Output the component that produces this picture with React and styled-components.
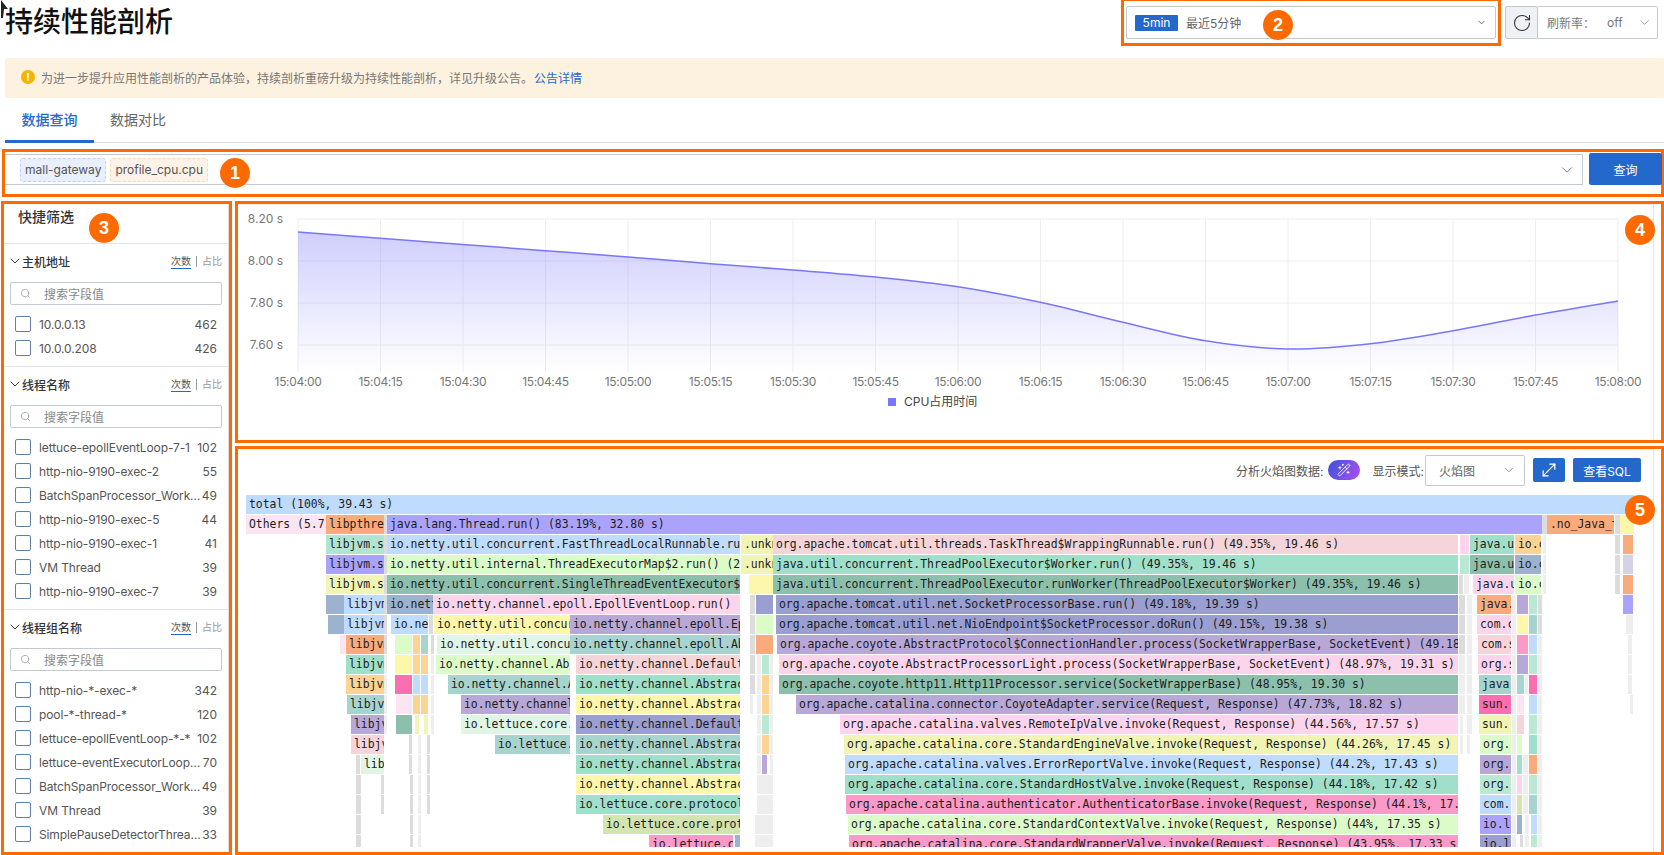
import React from 'react';
import styled, { createGlobalStyle } from 'styled-components';
import { ChevronDown, RotateCw, Search, WandSparkles, MoveDiagonal } from 'lucide-react';

const SANS = `Inter, "Noto Sans CJK SC", sans-serif`;
const ORANGE = '#ff6a00';
const BLUE = '#2468cc';

const Global = createGlobalStyle`
  html, body { margin: 0; padding: 0; background: #fff; }
  body { width: 1664px; height: 855px; overflow: hidden; font-family: ${SANS}; }
  * { box-sizing: border-box; }
`;

const Page = styled.div`
  position: relative;
  width: 1664px;
  height: 855px;
  overflow: hidden;
  display: flex;
  flex-direction: column;
`;
const Cursor = styled.svg`
  position: absolute;
  left: 0;
  top: 0;
`;
const Header = styled.header`
  height: 46px;
  padding: 0 6px 0 5px;
  display: flex;
  align-items: flex-start;
  justify-content: space-between;
`;
const Title = styled.h1`
  margin: 4px 0 0;
  font-size: 28px;
  line-height: 36px;
  font-weight: 500;
  color: #111;
`;
const HeaderRight = styled.div`
  display: flex;
  align-items: flex-start;
`;
const Marked = styled.div`
  position: relative;
  border: 3px solid ${ORANGE};
`;
const TimeBox = styled(Marked)`
  width: 380px;
  height: 48px;
  margin: -2px 4px 0 0;
  padding: 5px 2px;
`;
const TimeSelect = styled.div`
  height: 33px;
  border: 1px solid #c4c8d0;
  border-radius: 2px;
  display: flex;
  align-items: center;
  padding: 0 8px 0 8px;
  font-size: 12px;
  color: #666;
`;
const TimeTag = styled.span`
  width: 43px;
  height: 16px;
  background: ${BLUE};
  color: #fff;
  border-radius: 1px;
  text-align: center;
  line-height: 16px;
  margin-right: 8px;
`;
const Grow = styled.span`
  flex: 1;
`;
const RefreshButton = styled.div`
  width: 33px;
  height: 33px;
  margin-top: 6px;
  background: #eef1f6;
  border: 1px solid #c4c8d0;
  border-radius: 2px;
  display: flex;
  align-items: center;
  justify-content: center;
  color: #333;
`;
const RateSelect = styled.div`
  width: 120px;
  height: 33px;
  margin-top: 6px;
  border: 1px solid #c4c8d0;
  border-left: none;
  border-radius: 0 2px 2px 0;
  display: flex;
  align-items: center;
  padding: 0 5px 0 9px;
  font-size: 12px;
  color: #777;
`;
const RateValue = styled.span`
  margin-left: 12px;
  flex: 1;
`;
const Banner = styled.div`
  height: 40px;
  margin: 12px 0 0 5px;
  background: #fdf1e0;
  border-radius: 2px;
  display: flex;
  align-items: center;
  padding: 0 0 2px 16px;
  font-size: 12px;
  color: #777;
`;
const WarnDot = styled.span`
  width: 14px;
  height: 14px;
  border-radius: 50%;
  background: #f5b400;
  color: #fff;
  font-size: 11px;
  font-weight: 700;
  line-height: 14px;
  text-align: center;
  margin-right: 6px;
`;
const BannerLink = styled.a`
  color: ${BLUE};
  margin-left: 1px;
`;
const Tabs = styled.div`
  height: 45px;
  margin-left: 5px;
  border-bottom: 1px solid #ddd;
  display: flex;
`;
const Tab = styled.div`
  height: 45px;
  width: ${(p) => (p.$active ? '89px' : '88px')};
  padding-top: 12px;
  text-align: center;
  font-size: 14px;
  line-height: 20px;
  color: ${(p) => (p.$active ? BLUE : '#666')};
  border-bottom: ${(p) => (p.$active ? `3px solid ${BLUE}` : 'none')};
  font-weight: ${(p) => (p.$active ? 500 : 400)};
`;
const QueryBox = styled(Marked)`
  height: 48px;
  margin: 6px 0 0 2px;
  padding: 1px 0 0;
  display: flex;
  gap: 6px;
`;
const QuerySelect = styled.div`
  flex: 1;
  height: 31px;
  margin-top: 1px;
  border-top: 1px solid #c4c8d0;
  border-bottom: 1px solid #c4c8d0;
  border-right: 1px solid #c4c8d0;
  display: flex;
  align-items: center;
  gap: 4px;
  padding: 0 6px 0 15px;
  color: #666;
`;
const QTag = styled.span`
  height: 24px;
  padding: 0 4px;
  border-radius: 3px;
  font-size: 12px;
  line-height: 22px;
  color: #555;
  background: ${(p) => (p.$warm ? '#fdf2e8' : '#e9effc')};
  border: 1px dashed ${(p) => (p.$warm ? '#f7d8c0' : '#bfd2f6')};
`;
const PrimaryButton = styled.button`
  border: none;
  border-radius: 2px;
  background: ${BLUE};
  color: #fff;
  font-family: ${SANS};
  font-size: 12px;
  padding: 0;
  display: flex;
  align-items: center;
  justify-content: center;
`;
const QueryButton = styled(PrimaryButton)`
  width: 73px;
  height: 32px;
  margin-right: -1px;
  position: relative;
`;
const Main = styled.div`
  flex: 1;
  min-height: 0;
  margin: 4px 0 0 1px;
  display: flex;
  gap: 3px;
`;
const Sidebar = styled(Marked)`
  width: 231px;
  height: 654px;
  flex: none;
`;
const SideInner = styled.div`
  height: 100%;
  border-right: 1px solid #ddd;
  overflow: hidden;
`;
const SideTitle = styled.div`
  height: 40px;
  padding: 3px 0 0 14px;
  font-size: 14px;
  line-height: 20px;
  font-weight: 500;
  color: #333;
  border-bottom: 1px solid #e3e5e8;
`;
const Group = styled.section`
  padding-bottom: 6px;
  border-bottom: ${(p) => (p.$last ? 'none' : '1px solid #e3e5e8')};
`;
const GroupHead = styled.div`
  height: 36px;
  margin-bottom: 2px;
  padding: 0 6px 2px 3px;
  display: flex;
  align-items: center;
  color: #333;
`;
const GroupName = styled.span`
  flex: 1;
  margin-left: -1px;
  font-size: 12px;
  font-weight: 500;
`;
const Metric = styled.span`
  position: relative;
  top: 1px;
  font-size: 10px;
  line-height: 13px;
  color: ${(p) => (p.$on ? '#555' : '#999')};
  border-bottom: 1px solid ${(p) => (p.$on ? BLUE : 'transparent')};
`;
const MetricBar = styled.span`
  width: 1px;
  height: 11px;
  margin: 0 5px;
  background: #999;
`;
const SearchField = styled.div`
  height: 23px;
  margin: 0 6px 7px;
  border: 1px solid #c4c8d0;
  border-radius: 2px;
  display: flex;
  align-items: center;
  padding-left: 9px;
  gap: 13px;
  font-size: 12px;
  color: #888;
`;
const Row = styled.div`
  height: 24px;
  padding: 0 11px;
  display: flex;
  align-items: center;
  font-size: 12px;
  color: #555;
`;
const Check = styled.span`
  flex: none;
  width: 16px;
  height: 16px;
  margin-right: 8px;
  border: 1px solid #5f7fa8;
  border-radius: 2px;
`;
const RowName = styled.span`
  flex: 1;
  min-width: 0;
  overflow: hidden;
  white-space: nowrap;
  text-overflow: ellipsis;
  letter-spacing: -0.12px;
`;
const RowCount = styled.span`
  flex: none;
`;
const RightColumn = styled.div`
  flex: 1;
  min-width: 0;
  display: flex;
  flex-direction: column;
  gap: 3px;
`;
const ChartPanel = styled(Marked)`
  height: 242px;
`;
const FlamePanel = styled(Marked)`
  height: 409px;
`;
const PanelInner = styled.div`
  width: 1416px;
  height: 100%;
  border-top: 1px solid #eee;
  border-right: 1px solid #e6e6e6;
  overflow: hidden;
`;
const ChartSvg = styled.svg`
  display: block;
  font-family: ${SANS};
`;
const FlameTools = styled.div`
  height: 40px;
  margin-bottom: 5px;
  padding-right: 12px;
  display: flex;
  align-items: center;
  font-size: 12px;
  color: #555;
`;
const MagicToggle = styled.span`
  width: 32px;
  height: 20px;
  margin: 0 13px 0 4px;
  border-radius: 10px;
  background: linear-gradient(120deg, #3a55d6, #ae4cf2);
  color: #fff;
  display: flex;
  align-items: center;
  justify-content: center;
`;
const ModeSelect = styled.div`
  width: 100px;
  height: 31px;
  margin: 0 8px 0 1px;
  border: 1px solid #c4c8d0;
  border-radius: 2px;
  display: flex;
  align-items: center;
  justify-content: space-between;
  padding: 0 8px 0 13px;
  color: #666;
`;
const ExpandButton = styled(PrimaryButton)`
  width: 32px;
  height: 24px;
  margin-right: 8px;
`;
const SqlButton = styled(PrimaryButton)`
  width: 68px;
  height: 24px;
`;
const Flame = styled.div`
  height: 352px;
  overflow: hidden;
  display: flex;
  flex-direction: column;
  gap: 1px;
`;
const FlameRow = styled.div`
  position: relative;
  height: 19px;
  flex: none;
`;
const Bar = styled.div`
  position: absolute;
  top: 0;
  height: 19px;
  padding-left: 3px;
  overflow: hidden;
  white-space: nowrap;
  background: ${(p) => p.$c};
  font: 11.42px/19px "DejaVu Sans Mono", "Liberation Mono", monospace;
  color: #1c1c1c;
`;
const Badge = styled.span`
  position: absolute;
  width: 30px;
  height: 30px;
  border-radius: 50%;
  background: ${ORANGE};
  color: #fff;
  font: 700 18px/30px "Liberation Sans", sans-serif;
  text-align: center;
`;

// Flame palette
const P = {
  blue: '#bfdcff', pink: '#fce4f3', or: '#f9ab7b', pur: '#aba3fb', grey: '#dcdcdc', lg: '#eeeeee',
  yel: '#fdf7ab', mint: '#b2e4d2', sand: '#f0f5b5', rose: '#f5d5da', pk: '#fcd5ed', teal: '#a0e0ca',
  tan: '#fbd392', lime: '#dbfcc8', sage: '#8cc0ac', steel: '#9cb2ce', indigo: '#9b9ed1', lav: '#b8a8d8',
  aqua: '#a8d4d0', pale: '#e0f5e6', hot: '#f96fb0', bub: '#f99ac8', moss: '#d3e4b0', mist: '#d5d2e6',
  mt2: '#b9e8d4',
};
const ND = 'io.netty.channel.Default';
const NA = 'io.netty.channel.Abstract';

const FLAME = [
  [[246, 1634, P.blue, 'total (100%, 39.43 s)']],
  [[246, 326, P.pink, 'Others (5.71%, 2.25 s)'], [326, 384, P.or, 'libpthread'], [384, 387, P.grey], [387, 1542, P.pur, 'java.lang.Thread.run() (83.19%, 32.80 s)'], [1542, 1547, P.grey], [1547, 1614, P.or, '.no_Java_thread'], [1615, 1620, P.grey], [1620, 1634, P.yel]],
  [[326, 384, P.mint, 'libjvm.so'], [384, 387, P.grey], [387, 740, P.blue, 'io.netty.util.concurrent.FastThreadLocalRunnable.run()'], [741, 773, P.sand, '.unknown'], [773, 1458, P.rose, 'org.apache.tomcat.util.threads.TaskThread$WrappingRunnable.run() (49.35%, 19.46 s)'], [1460, 1469, P.pk], [1470, 1514, P.teal, 'java.util'], [1515, 1541, P.tan, 'io.c'], [1543, 1546, P.lg], [1615, 1620, P.grey], [1623, 1633, P.or]],
  [[326, 384, P.pur, 'libjvm.so'], [384, 387, P.grey], [387, 740, P.lime, 'io.netty.util.internal.ThreadExecutorMap$2.run() (2'], [741, 773, P.sand, '.unknown'], [773, 1458, P.teal, 'java.util.concurrent.ThreadPoolExecutor$Worker.run() (49.35%, 19.46 s)'], [1460, 1469, P.mt2], [1470, 1514, P.sage, 'java.util'], [1515, 1541, P.steel, 'io.c'], [1543, 1546, P.lg], [1615, 1620, P.grey], [1623, 1633, P.mist]],
  [[326, 384, P.sand, 'libjvm.so'], [384, 387, P.grey], [387, 740, P.sage, 'io.netty.util.concurrent.SingleThreadEventExecutor$'], [749, 754, P.yel], [754, 773, P.yel], [773, 1458, P.sage, 'java.util.concurrent.ThreadPoolExecutor.runWorker(ThreadPoolExecutor$Worker) (49.35%, 19.46 s)'], [1459, 1463, P.grey], [1464, 1469, P.lg], [1473, 1514, P.pk, 'java.util'], [1515, 1541, P.lime, 'io.c'], [1543, 1546, P.lg], [1615, 1620, P.grey], [1623, 1633, P.or]],
  [[326, 344, P.steel], [344, 384, P.blue, ' libjvm'], [384, 387, P.grey], [387, 433, P.steel, 'io.netty'], [433, 740, P.pk, 'io.netty.channel.epoll.EpollEventLoop.run()'], [750, 755, P.grey], [756, 773, P.indigo], [776, 1458, P.indigo, 'org.apache.tomcat.util.net.SocketProcessorBase.run() (49.18%, 19.39 s)'], [1459, 1465, P.grey], [1467, 1472, P.lg], [1477, 1511, P.or, 'java.'], [1512, 1516, P.lg], [1517, 1528, P.lav], [1529, 1537, P.mt2], [1538, 1542, P.grey], [1623, 1633, P.pur]],
  [[328, 344, P.steel], [344, 384, P.blue, ' libjvm'], [384, 387, P.grey], [391, 428, P.blue, 'io.net'], [429, 433, P.grey], [434, 570, P.yel, 'io.netty.util.concurrent'], [570, 740, P.lav, 'io.netty.channel.epoll.Epoll'], [750, 755, P.grey], [756, 773, P.lime], [776, 1458, P.indigo, 'org.apache.tomcat.util.net.NioEndpoint$SocketProcessor.doRun() (49.15%, 19.38 s)'], [1459, 1465, P.grey], [1467, 1472, P.lg], [1477, 1511, P.pk, 'com.c'], [1512, 1516, P.lg], [1517, 1528, P.yel], [1529, 1537, P.aqua], [1538, 1542, P.grey], [1626, 1633, P.lg]],
  [[340, 345, P.pink], [346, 384, P.or, 'libjvm'], [384, 387, P.grey], [395, 412, P.lime], [413, 420, P.tan], [421, 428, P.aqua], [431, 433, P.grey], [437, 570, P.pale, 'io.netty.util.concurrent'], [570, 740, P.aqua, 'io.netty.channel.epoll.Abstract'], [750, 755, P.grey], [756, 773, P.or], [777, 1458, P.lav, 'org.apache.coyote.AbstractProtocol$ConnectionHandler.process(SocketWrapperBase, SocketEvent) (49.18%'], [1459, 1465, P.grey], [1467, 1472, P.lg], [1478, 1511, P.rose, 'com.s'], [1512, 1516, P.lg], [1517, 1528, P.bub], [1529, 1537, P.blue], [1538, 1542, P.lg], [1628, 1632, P.lg]],
  [[346, 384, P.teal, 'libjvm'], [384, 387, P.lg], [395, 412, P.yel], [413, 420, P.tan], [421, 428, P.tan], [431, 433, P.lg], [436, 570, P.lime, 'io.netty.channel.Abstract'], [576, 740, P.rose, ND], [750, 755, P.grey], [757, 761, P.lg], [762, 769, P.mt2], [770, 773, P.lg], [779, 1458, P.pk, 'org.apache.coyote.AbstractProcessorLight.process(SocketWrapperBase, SocketEvent) (48.97%, 19.31 s)'], [1459, 1465, P.lg], [1467, 1472, P.lg], [1478, 1511, P.pk, 'org.s'], [1512, 1516, P.lg], [1517, 1528, P.lav], [1529, 1537, P.mt2], [1538, 1542, P.lg], [1628, 1632, P.lg]],
  [[346, 384, P.tan, 'libjvm'], [384, 387, P.lg], [395, 412, P.hot], [413, 420, P.blue], [421, 428, P.blue], [431, 433, P.lg], [448, 570, P.aqua, 'io.netty.channel.Abstract'], [576, 740, P.teal, NA], [750, 755, P.grey], [757, 761, P.lg], [762, 769, P.tan], [770, 773, P.lg], [779, 1458, P.sage, 'org.apache.coyote.http11.Http11Processor.service(SocketWrapperBase) (48.95%, 19.30 s)'], [1459, 1465, P.lg], [1467, 1472, P.lg], [1479, 1511, P.aqua, 'java.'], [1512, 1516, P.lg], [1517, 1524, P.aqua], [1525, 1528, P.lg], [1529, 1537, P.hot], [1538, 1542, P.lg], [1628, 1632, P.lg]],
  [[347, 384, P.aqua, 'libjvm'], [384, 387, P.lg], [396, 412, P.pink], [413, 420, P.tan], [421, 428, P.tan], [431, 433, P.lg], [461, 570, P.lav, 'io.netty.channel.Abstract'], [576, 740, P.yel, NA], [750, 753, P.lg], [757, 761, P.lg], [762, 769, P.tan], [770, 773, P.lg], [796, 1458, P.lav, 'org.apache.catalina.connector.CoyoteAdapter.service(Request, Response) (47.73%, 18.82 s)'], [1459, 1465, P.lg], [1467, 1472, P.lg], [1479, 1511, P.hot, 'sun.'], [1512, 1516, P.lg], [1517, 1524, P.pink], [1529, 1537, P.blue], [1538, 1542, P.lg], [1630, 1632, P.lg]],
  [[351, 384, P.lav, 'libjvm'], [384, 387, P.lg], [396, 412, P.sage], [415, 419, P.sand], [424, 428, P.sand], [431, 433, P.lg], [461, 570, P.pale, 'io.lettuce.core.'], [576, 740, P.indigo, ND], [757, 761, P.lg], [762, 769, P.mt2], [770, 773, P.lg], [840, 1458, P.pk, 'org.apache.catalina.valves.RemoteIpValve.invoke(Request, Response) (44.56%, 17.57 s)'], [1460, 1463, P.lg], [1467, 1472, P.lg], [1479, 1511, P.sand, 'sun.'], [1512, 1516, P.lg], [1517, 1524, P.rose], [1529, 1537, P.mt2], [1538, 1542, P.lg]],
  [[351, 384, P.rose, 'libjvm'], [409, 412, P.grey], [418, 420, P.lg], [427, 429, P.grey], [495, 570, P.aqua, 'io.lettuce.core'], [576, 740, P.aqua, NA], [757, 761, P.lg], [762, 769, P.tan], [770, 773, P.lg], [844, 1458, P.sand, 'org.apache.catalina.core.StandardEngineValve.invoke(Request, Response) (44.26%, 17.45 s)'], [1460, 1463, P.lg], [1467, 1469, P.lg], [1480, 1511, P.lime, 'org.'], [1512, 1516, P.lg], [1517, 1522, P.lime], [1529, 1537, P.teal], [1538, 1542, P.lg]],
  [[356, 360, P.grey], [361, 384, P.pale, 'libjvm'], [409, 412, P.grey], [418, 420, P.lg], [427, 429, P.grey], [576, 740, P.teal, NA], [757, 761, P.lg], [762, 767, P.lav], [770, 773, P.lg], [845, 1458, P.blue, 'org.apache.catalina.valves.ErrorReportValve.invoke(Request, Response) (44.2%, 17.43 s)'], [1480, 1511, P.lav, 'org.'], [1512, 1516, P.lg], [1517, 1522, P.teal], [1523, 1528, P.lg], [1529, 1537, P.or], [1538, 1542, P.lg]],
  [[356, 361, P.grey], [381, 384, P.grey], [410, 413, P.grey], [418, 420, P.lg], [427, 429, P.grey], [576, 740, P.yel, NA], [757, 773, P.lg], [845, 1458, P.teal, 'org.apache.catalina.core.StandardHostValve.invoke(Request, Response) (44.18%, 17.42 s)'], [1480, 1511, P.mt2, 'org.'], [1512, 1516, P.lg], [1517, 1522, P.pk], [1523, 1528, P.lg], [1529, 1537, P.mt2], [1538, 1542, P.lg]],
  [[356, 361, P.grey], [381, 384, P.grey], [410, 413, P.grey], [418, 420, P.lg], [427, 429, P.grey], [576, 740, P.teal, 'io.lettuce.core.protocol'], [757, 773, P.lg], [846, 1458, P.bub, 'org.apache.catalina.authenticator.AuthenticatorBase.invoke(Request, Response) (44.1%, 17.39 s)'], [1480, 1511, P.blue, 'com.'], [1512, 1516, P.lg], [1517, 1522, P.moss], [1523, 1528, P.lg], [1529, 1537, P.aqua], [1538, 1542, P.lg]],
  [[356, 361, P.grey], [410, 412, P.grey], [418, 420, P.lg], [603, 740, P.moss, 'io.lettuce.core.protocol'], [755, 773, P.lg], [848, 1458, P.lime, 'org.apache.catalina.core.StandardContextValve.invoke(Request, Response) (44%, 17.35 s)'], [1480, 1511, P.pur, 'io.l'], [1512, 1516, P.lg], [1517, 1522, P.steel], [1525, 1529, P.lg], [1531, 1537, P.blue], [1538, 1542, P.lg]],
  [[356, 361, P.grey], [410, 412, P.grey], [418, 420, P.lg], [649, 733, P.bub, 'io.lettuce.core'], [735, 740, P.steel], [755, 773, P.lg], [849, 1458, P.bub, 'org.apache.catalina.core.StandardWrapperValve.invoke(Request, Response) (43.95%, 17.33 s)'], [1480, 1511, P.indigo, 'io.l'], [1512, 1516, P.lg], [1520, 1522, P.grey], [1525, 1529, P.lg], [1531, 1537, P.mt2], [1538, 1542, P.lg]],
];

const GROUPS = [
  { name: '主机地址', rows: [['10.0.0.13', 462], ['10.0.0.208', 426]] },
  { name: '线程名称', rows: [['lettuce-epollEventLoop-7-1', 102], ['http-nio-9190-exec-2', 55], ['BatchSpanProcessor_WorkerThread', 49], ['http-nio-9190-exec-5', 44], ['http-nio-9190-exec-1', 41], ['VM Thread', 39], ['http-nio-9190-exec-7', 39]] },
  { name: '线程组名称', rows: [['http-nio-*-exec-*', 342], ['pool-*-thread-*', 120], ['lettuce-epollEventLoop-*-*', 102], ['lettuce-eventExecutorLoop-*-*', 70], ['BatchSpanProcessor_WorkerThread', 49], ['VM Thread', 39], ['SimplePauseDetectorThread_0', 33]] },
];

const X0 = 298;
const XSTEP = 82.5;
const TICKS = ['15:04:00', '15:04:15', '15:04:30', '15:04:45', '15:05:00', '15:05:15', '15:05:30', '15:05:45', '15:06:00', '15:06:15', '15:06:30', '15:06:45', '15:07:00', '15:07:15', '15:07:30', '15:07:45', '15:08:00'];
const VALUES = [232, 238.3, 244.5, 250.7, 257, 263.7, 270, 277, 286.7, 302.3, 322.3, 340.7, 349, 343.7, 330.7, 315, 301];
const YGRID = [[219, '8.20 s'], [261, '8.00 s'], [303, '7.80 s'], [345, '7.60 s']];
const XEND = X0 + XSTEP * 16;
const PTS = VALUES.map((y, i) => [X0 + XSTEP * i, y]);

function smoothPath(pts) {
  let d = `M${pts[0][0]} ${pts[0][1]}`;
  for (let i = 0; i < pts.length - 1; i++) {
    const p0 = pts[Math.max(0, i - 1)];
    const p1 = pts[i];
    const p2 = pts[i + 1];
    const p3 = pts[Math.min(pts.length - 1, i + 2)];
    d += `C${p1[0] + (p2[0] - p0[0]) / 6} ${p1[1] + (p2[1] - p0[1]) / 6} ${p2[0] - (p3[0] - p1[0]) / 6} ${p2[1] - (p3[1] - p1[1]) / 6} ${p2[0]} ${p2[1]}`;
  }
  return d;
}
const LINE = smoothPath(PTS);

function CpuChart() {
  return (
    <ChartSvg width="1415" height="235" viewBox="238 205 1415 235">
      <defs>
        <linearGradient id="cpuFill" x1="0" y1="0" x2="0" y2="1">
          <stop offset="0" stopColor="#7b78fb" stopOpacity="0.36" />
          <stop offset="1" stopColor="#7b78fb" stopOpacity="0" />
        </linearGradient>
      </defs>
      {YGRID.map(([y, label]) => (
        <g key={label}>
          <line x1="297" x2={XEND} y1={y} y2={y} stroke="#eeeeee" />
          <text x="283" y={y + 4} textAnchor="end" fontSize="12" fill="#777">{label}</text>
        </g>
      ))}
      {TICKS.map((t, i) => (
        <g key={t}>
          <line x1={X0 + XSTEP * i} x2={X0 + XSTEP * i} y1="219" y2="372" stroke="#eeeeee" />
          <text x={X0 + XSTEP * i} y="386" textAnchor="middle" fontSize="12" letterSpacing="-0.35" fill="#777">{t}</text>
        </g>
      ))}
      <path d={`${LINE}L${XEND} 372L${X0} 372Z`} fill="url(#cpuFill)" />
      <path d={LINE} fill="none" stroke="#7a76fa" strokeWidth="1.5" />
      <rect x="888" y="398" width="8" height="8" fill="#7a76fa" />
      <text x="904" y="406" fontSize="12" fill="#444">CPU占用时间</text>
    </ChartSvg>
  );
}

function FilterGroup({ group, last }) {
  return (
    <Group $last={last}>
      <GroupHead>
        <ChevronDown size={16} strokeWidth={1.4} />
        <GroupName>{group.name}</GroupName>
        <Metric $on>次数</Metric>
        <MetricBar />
        <Metric>占比</Metric>
      </GroupHead>
      <SearchField>
        <Search size={11} strokeWidth={1.4} />
        搜索字段值
      </SearchField>
      {group.rows.map(([name, count]) => (
        <Row key={name}>
          <Check />
          <RowName>{name}</RowName>
          <RowCount>{count}</RowCount>
        </Row>
      ))}
    </Group>
  );
}

export default function App() {
  return (
    <Page>
      <Global />
      <Cursor width="9" height="20" viewBox="0 0 9 20">
        <path d="M1 0 L8 9 L4 9 L3 18 L1 18 Z" fill="#222" />
      </Cursor>
      <Header>
        <Title>持续性能剖析</Title>
        <HeaderRight>
          <TimeBox>
            <TimeSelect>
              <TimeTag>5min</TimeTag>
              最近5分钟
              <Grow />
              <ChevronDown size={11} strokeWidth={1.6} color="#444" />
            </TimeSelect>
            <Badge style={{ left: 139, top: 9 }}>2</Badge>
          </TimeBox>
          <RefreshButton><RotateCw size={20} strokeWidth={1.3} /></RefreshButton>
          <RateSelect>
            刷新率：
            <RateValue>off</RateValue>
            <ChevronDown size={15} strokeWidth={1} />
          </RateSelect>
        </HeaderRight>
      </Header>
      <Banner>
        <WarnDot>!</WarnDot>
        为进一步提升应用性能剖析的产品体验，持续剖析重磅升级为持续性能剖析，详见升级公告。
        <BannerLink>公告详情</BannerLink>
      </Banner>
      <Tabs>
        <Tab $active>数据查询</Tab>
        <Tab>数据对比</Tab>
      </Tabs>
      <QueryBox>
        <QuerySelect>
          <QTag>mall-gateway</QTag>
          <QTag $warm>profile_cpu.cpu</QTag>
          <Grow />
          <ChevronDown size={18} strokeWidth={1.1} />
        </QuerySelect>
        <QueryButton>查询</QueryButton>
        <Badge style={{ left: 215, top: 6 }}>1</Badge>
      </QueryBox>
      <Main>
        <Sidebar>
          <SideInner>
            <SideTitle>快捷筛选</SideTitle>
            {GROUPS.map((g, i) => (
              <FilterGroup key={g.name} group={g} last={i === GROUPS.length - 1} />
            ))}
          </SideInner>
          <Badge style={{ left: 85, top: 9 }}>3</Badge>
        </Sidebar>
        <RightColumn>
          <ChartPanel>
            <PanelInner><CpuChart /></PanelInner>
            <Badge style={{ left: 1387, top: 11 }}>4</Badge>
          </ChartPanel>
          <FlamePanel>
            <PanelInner>
              <FlameTools>
                <Grow />
                分析火焰图数据:
                <MagicToggle><WandSparkles size={14} strokeWidth={1.5} /></MagicToggle>
                显示模式:
                <ModeSelect>
                  火焰图
                  <ChevronDown size={14} strokeWidth={1.2} />
                </ModeSelect>
                <ExpandButton><MoveDiagonal size={20} strokeWidth={1.5} /></ExpandButton>
                <SqlButton>查看SQL</SqlButton>
              </FlameTools>
              <Flame>
                {FLAME.map((bars, r) => (
                  <FlameRow key={r}>
                    {bars.map(([x0, x1, c, text], i) => (
                      <Bar key={i} $c={c} style={{ left: x0 - 238, width: x1 - x0 }}>{text}</Bar>
                    ))}
                  </FlameRow>
                ))}
              </Flame>
            </PanelInner>
            <Badge style={{ left: 1387, top: 46 }}>5</Badge>
          </FlamePanel>
        </RightColumn>
      </Main>
    </Page>
  );
}
